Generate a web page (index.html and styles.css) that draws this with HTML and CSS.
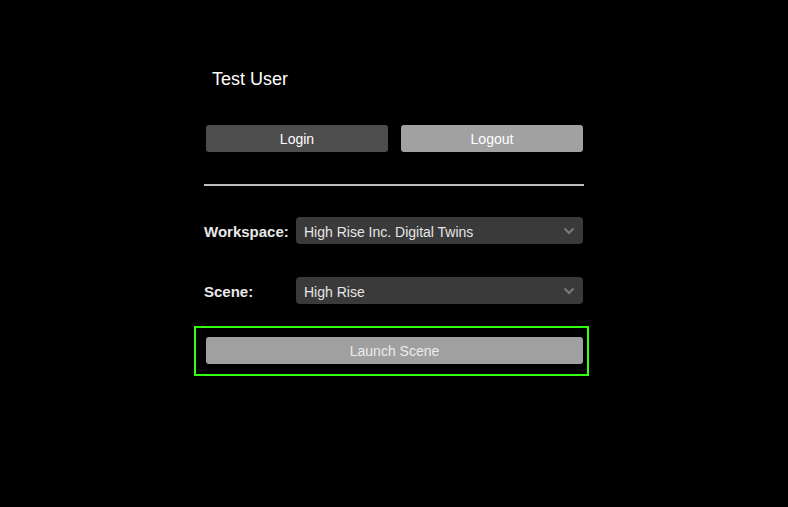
FILE: index.html
```html
<html>
    <head>
        <meta charset="UTF-8">
        <link rel="stylesheet" href="styles.css">
    </head>
    <body>
        <div id="panel">
            <div class="user-name">Test User</div>

            <div class="auth-row">
                <button class="btn btn-login">Login</button>
                <button class="btn btn-logout">Logout</button>
            </div>

            <hr class="divider">

            <div class="field-row">
                <label for="workspace" class="field-label">Workspace:</label>
                <div class="select-wrap">
                    <select id="workspace" class="picker">
                        <option>High Rise Inc. Digital Twins</option>
                    </select>
                    <svg class="chevron" width="12" height="8" viewBox="0 0 12 8">
                        <path d="M1.5 1.5 L6 6 L10.5 1.5" fill="none" stroke="#7a7a7a" stroke-width="2"/>
                    </svg>
                </div>
            </div>

            <div class="field-row scene-row">
                <label for="scene" class="field-label">Scene:</label>
                <div class="select-wrap">
                    <select id="scene" class="picker">
                        <option>High Rise</option>
                    </select>
                    <svg class="chevron" width="12" height="8" viewBox="0 0 12 8">
                        <path d="M1.5 1.5 L6 6 L10.5 1.5" fill="none" stroke="#7a7a7a" stroke-width="2"/>
                    </svg>
                </div>
            </div>

            <!-- focused launch button -->
            <div class="launch-box">
                <button class="btn btn-launch">Launch Scene</button>
            </div>
        </div>
    </body>
</html>
```

FILE: styles.css
```css
html, body {
    margin: 0px;
    background: black;
    font-family: "Liberation Sans", Arial, sans-serif;
    color: white;
}

#panel {
    width: 380px;
    margin-left: 204px;
    padding-top: 69px;
}

.user-name {
    font-size: 18px;
    line-height: 20px;
    padding-left: 8px;
}

.auth-row {
    display: flex;
    gap: 13px;
    margin-top: 36px;
    padding: 0 1px 0 2px;
}

.btn {
    border: none;
    border-radius: 3px;
    height: 27px;
    font-family: "Liberation Sans", Arial, sans-serif;
    font-size: 14px;
    color: white;
    padding: 0;
}

.btn-login {
    flex: 1;
    background: #4d4d4d;
}
.btn-logout {
    flex: 1;
    background: #a1a1a1;
}

.divider {
    margin: 32px 0 0 0;
    border: none;
    height: 2px;
    background: #bdbdbd;
}

.field-row {
    display: flex;
    align-items: center;
    margin-top: 31px;
    padding-right: 1px;
}
.scene-row {
    margin-top: 33px;
}

.field-label {
    width: 92px;
    padding-top: 2px;
    font-size: 15px;
    font-weight: bold;
    color: #e8e8e8;
}

.select-wrap {
    position: relative;
    flex: 1;
}

.picker {
    appearance: none;
    -webkit-appearance: none;
    width: 100%;
    height: 27px;
    border: none;
    border-radius: 4px;
    background: #3a3a3a;
    color: #e6e6e6;
    font-family: "Liberation Sans", Arial, sans-serif;
    font-size: 14px;
    padding: 2px 0 0 8px;
    outline: none;
}

.chevron {
    position: absolute;
    right: 8px;
    top: 10px;
}

.launch-box {
    margin: 22px -5px 0 -10px;
    border: 2px solid #33ff11;
    padding: 9px 4px 10px 10px;
    display: flex;
}

.btn-launch {
    flex: 1;
    background: #a0a0a0;
    color: #ececec;
}
```
